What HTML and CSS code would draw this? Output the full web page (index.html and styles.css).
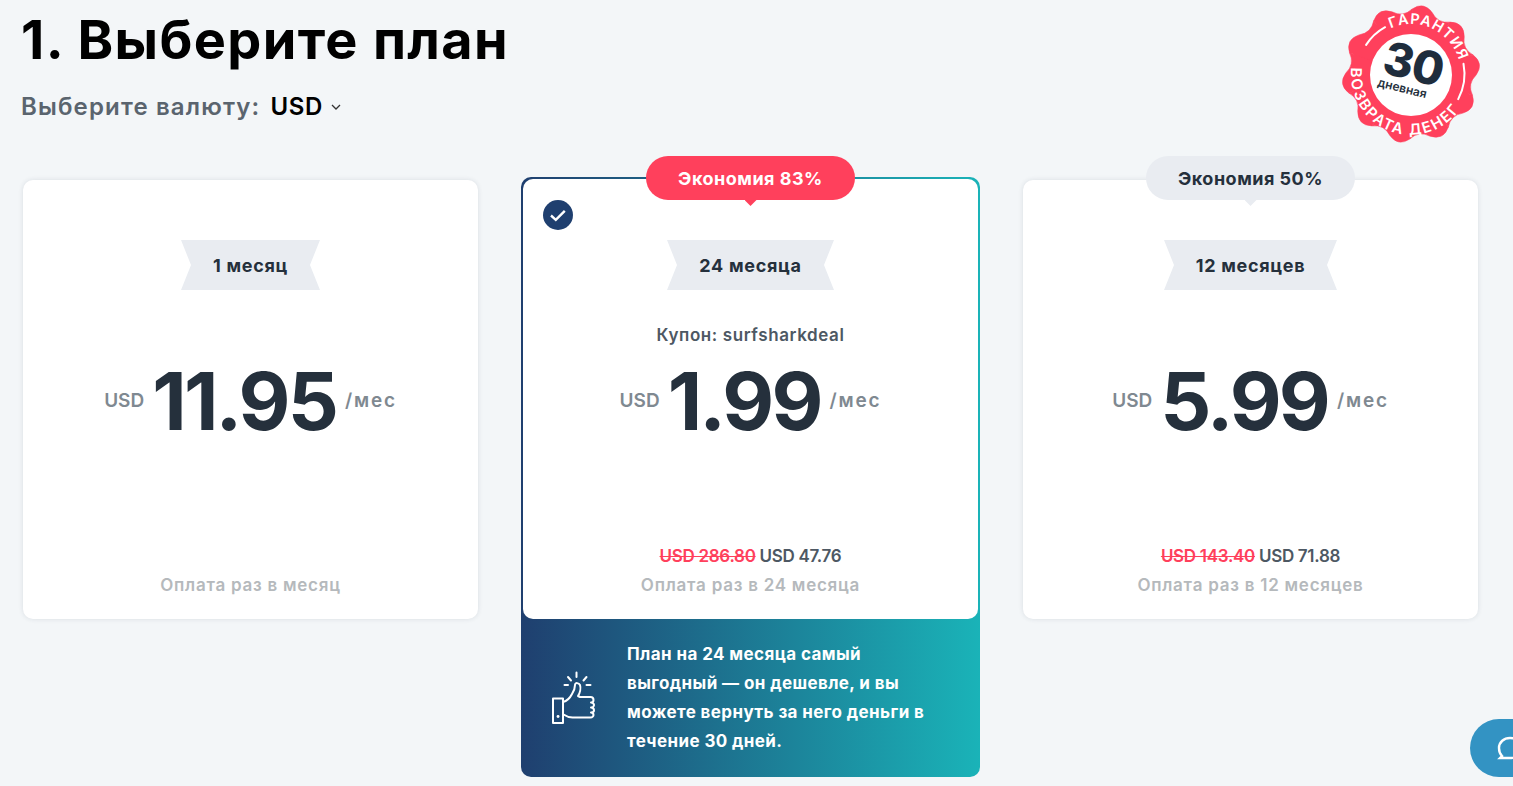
FILE: index.html
```html
<!DOCTYPE html>
<html lang="ru">
<head>
<meta charset="utf-8">
<title>Выберите план</title>
<link rel="stylesheet" href="styles.css">
</head>
<body>
<main class="page">
  <header class="head">
    <h1 class="title">1. Выберите план</h1>
    <div class="currency">
      <span class="currency-label">Выберите валюту:</span>
      <span class="currency-value">USD</span>
      <svg class="chevron" viewBox="0 0 10 6" width="10" height="6"><path d="M1 1l4 4 4-4" fill="none" stroke="#333" stroke-width="1.3"/></svg>
    </div>
    <svg class="seal" viewBox="-72 -72 144 144" width="144" height="144">
      <defs>
        <path id="lobe" d="M0 0L1.13 -64.99Q12.85 -72.9 21.16 -61.46Q26.76 -50.33 39.12 -51.91Z"/>
        <path id="arc-top" d="M-20.3 -45.7A50 50 0 0 1 50 -1.7"/>
        <path id="arc-bottom" d="M-59.7 -6.3A60 60 0 0 0 59.1 10.4"/>
      </defs>
      <g class="seal-body">
        <circle r="60"/>
        <use href="#lobe"/>
        <use href="#lobe" transform="rotate(36)"/>
        <use href="#lobe" transform="rotate(72)"/>
        <use href="#lobe" transform="rotate(108)"/>
        <use href="#lobe" transform="rotate(144)"/>
        <use href="#lobe" transform="rotate(180)"/>
        <use href="#lobe" transform="rotate(216)"/>
        <use href="#lobe" transform="rotate(252)"/>
        <use href="#lobe" transform="rotate(288)"/>
        <use href="#lobe" transform="rotate(324)"/>
      </g>
      <circle class="seal-disc" r="41" cy="1"/>
      <path class="seal-line" d="M-44.9 -29.1A53.5 53.5 0 0 1 -25.9 -46.8"/>
      <path class="seal-line" d="M52.5 -10.2A53.5 53.5 0 0 1 47.2 25.1"/>
      <text class="seal-arc seal-arc-top"><textPath href="#arc-top">ГАРАНТИЯ</textPath></text>
      <text class="seal-arc seal-arc-bottom"><textPath href="#arc-bottom">ВОЗВРАТА ДЕНЕГ</textPath></text>
      <g transform="rotate(14)">
        <text class="seal-num" x="0" y="6" text-anchor="middle">30</text>
        <text class="seal-small" x="-5" y="20" text-anchor="middle">дневная</text>
      </g>
    </svg>
  </header>

  <section class="plans">
    <article class="card card-side">
      <div class="ribbon ribbon-1">1 месяц</div>
      <div class="coupon"></div>
      <div class="price"><span class="cur">USD</span><span class="amount">11.95</span><span class="per">/мес</span></div>
      <div class="billing">
        <div class="bill-note">Оплата раз в месяц</div>
      </div>
    </article>

    <div class="featured">
      <article class="card card-main">
        <div class="bubble bubble-hot">Экономия 83%</div>
        <svg class="tick" viewBox="0 0 30 30" width="30" height="30"><circle cx="15" cy="15" r="15" fill="#1f3f6f"/><path d="M8 15.5l4.800 4.300 9-9" fill="none" stroke="#fff" stroke-width="2.400"/></svg>
        <div class="ribbon ribbon-24">24 месяца</div>
        <div class="coupon">Купон: surfsharkdeal</div>
        <div class="price"><span class="cur">USD</span><span class="amount">1.99</span><span class="per">/мес</span></div>
        <div class="billing">
          <div class="bill-total"><s class="old">USD 286.80</s> USD 47.76</div>
          <div class="bill-note">Оплата раз в 24 месяца</div>
        </div>
      </article>
      <div class="promo">
        <svg class="thumb" viewBox="0 0 70 70" width="70" height="70" fill="none" stroke="#fff" stroke-width="2" stroke-linecap="round" stroke-linejoin="round">
          <path d="M38.500 12.500v4.500M30 17l3 3.500M48.500 17l-3 3.500M26.500 25h3.500M48.500 25h4"/>
          <path d="M15 38.500h10v24.500h-10z"/>
          <path d="M25 42c4-1 7-4 9-8 2-3 3-7 3-9 0-3 4-2 5 0 1 3 0 8-2 11l2 1h10.500c2 0 3 1.500 3 3s-1 2.500-2.500 2.500c2 0 3 1.500 3 2.500s-1 2.500-3 2.500c2 0 3 1.500 3 3s-1 2-3 2c2 0 2.500 1.500 2.500 2.500s-1 2.500-3 2.500h-18c-4 0-6-1-9-3"/>
          <path d="M20 56.500h.1" stroke-width="2.800"/>
        </svg>
        <p class="promo-text">План на 24 месяца самый<br>выгодный — он дешевле, и вы<br>можете вернуть за него деньги в<br>течение 30 дней.</p>
      </div>
    </div>

    <article class="card card-side">
      <div class="bubble bubble-cool">Экономия 50%</div>
      <div class="ribbon ribbon-12">12 месяцев</div>
      <div class="coupon"></div>
      <div class="price"><span class="cur">USD</span><span class="amount">5.99</span><span class="per">/мес</span></div>
      <div class="billing">
        <div class="bill-total"><s class="old">USD 143.40</s> USD 71.88</div>
        <div class="bill-note">Оплата раз в 12 месяцев</div>
      </div>
    </article>
  </section>

  <button class="chat" type="button" aria-label="Чат">
    <svg viewBox="0 0 30 30" width="30" height="30"><path d="M6 23c-2-2-3-5-3-8 0-6 5-10 11-10s11 4 11 10-5 10-11 10H4l2-2z" fill="none" stroke="#fff" stroke-width="2.400"/></svg>
  </button>
</main>
</body>
</html>
```
FILE: styles.css
```css
* { box-sizing: border-box; }
html, body { margin: 0; height: 100%; }
body {
  background: #f3f6f8;
  font-family: Inter, "Noto Sans", "Liberation Sans", sans-serif;
  color: #25303c;
  overflow: hidden;
}
.page { position: relative; width: 1513px; height: 786px; overflow: hidden; }

.head { position: relative; height: 122px; padding-left: 21px; margin-bottom: 55px; }
.title { margin: 0; height: 80px; line-height: 80px; font-size: 54px; font-weight: 700; color: #000; letter-spacing: 1.350px; white-space: nowrap; }
.currency { display: flex; align-items: center; height: 32px; margin-top: 11px; font-size: 24px; font-weight: 600; line-height: 32px; }
.currency-label { color: #5a646e; letter-spacing: 1.150px; }
.currency-value { color: #000; margin-left: 10px; letter-spacing: .6px; }
.chevron { margin-left: 8px; }

.seal { position: absolute; left: 1339px; top: 1.500px; }
.seal-body { fill: #ff405c; stroke: #ff405c; stroke-width: .5; }
.seal-disc { fill: #fff; }
.seal-line { fill: none; stroke: #fff; stroke-width: 2; stroke-linecap: round; }
.seal-arc { fill: #fff; font-weight: 600; }
.seal-arc-top { font-size: 14.500px; letter-spacing: 1.100px; }
.seal-arc-bottom { font-size: 15px; letter-spacing: 1.900px; }
.seal-num { fill: #1f2d3d; font-size: 46px; font-weight: 800; letter-spacing: -1px; }
.seal-small { fill: #25303c; font-size: 12px; font-weight: 600; }

.plans { display: flex; align-items: flex-start; gap: 43px; padding-left: 23px; }

.card { position: relative; display: flex; flex-direction: column; align-items: center; width: 455px; background: #fff; border-radius: 10px; }
.card-side { height: 439px; margin-top: 3px; padding-top: 60px; box-shadow: 0 0 5px rgba(30, 50, 70, .12); }
.card-main { height: 440px; padding-top: 61px; }

.featured { width: 459px; height: 600px; padding: 2px 2px 0; border-radius: 10px; background: linear-gradient(90deg, #1f3f6f 0%, #1ab3b8 100%); }

.bubble { position: absolute; left: 50%; top: -24px; width: 209px; height: 44px; margin-left: -104.500px; border-radius: 22px; text-align: center; font-size: 18px; line-height: 45px; font-weight: 700; letter-spacing: .5px; }
.bubble::after { content: ""; position: absolute; left: 50%; bottom: -6px; width: 12px; height: 6px; margin-left: -6px; clip-path: polygon(0 0, 100% 0, 50% 100%); background: inherit; }
.bubble-hot { top: -23px; background: #ff405c; color: #fff; }
.bubble-cool { background: #e9ecf1; color: #25303c; }

.tick { position: absolute; left: 20px; top: 21px; }

.ribbon { height: 50px; display: flex; align-items: center; justify-content: center; background: #e9ecf1; font-size: 18px; font-weight: 700; letter-spacing: .7px; white-space: nowrap; clip-path: polygon(0 0, 100% 0, calc(100% - 10px) 50%, 100% 100%, 0 100%, 10px 50%); }
.ribbon-1 { width: 139px; }
.ribbon-24 { width: 167px; }
.ribbon-12 { width: 173px; }

.coupon { height: 24px; margin-top: 33px; font-size: 17px; font-weight: 600; line-height: 24px; color: #4d5863; letter-spacing: .6px; }

.price { display: flex; align-items: center; height: 100px; margin-top: 4px; }
.cur, .per { position: relative; top: -1px; font-size: 19px; font-weight: 600; color: #7f8991; }
.per { letter-spacing: 1.800px; }
.amount { margin: 0 9px 0 8px; font-size: 80px; line-height: 100px; font-weight: 700; color: #25303c; letter-spacing: -2.800px; }

.billing { margin-top: auto; padding-bottom: 19px; text-align: center; }
.bill-total { height: 29px; line-height: 29px; font-size: 17px; font-weight: 600; color: #4d5863; letter-spacing: -.3px; }
.old { color: #ff405c; }
.bill-note { height: 29px; line-height: 29px; font-size: 17px; font-weight: 600; color: #b5b9bc; letter-spacing: .75px; }

.promo { display: flex; align-items: center; height: 158px; padding-left: 17px; margin: 0 -2px; gap: 19px; }
.thumb { flex: none; margin-bottom: 6px; }
.promo-text { margin: 0; font-size: 17px; line-height: 29px; font-weight: 700; color: #fff; letter-spacing: .4px; white-space: nowrap; }

.chat { position: absolute; left: 1470px; top: 719px; width: 70px; height: 58px; padding: 0 0 0 26px; border: 0; border-radius: 29px; background: #3393c3; display: flex; align-items: center; }
.chat svg { flex: none; }
```
